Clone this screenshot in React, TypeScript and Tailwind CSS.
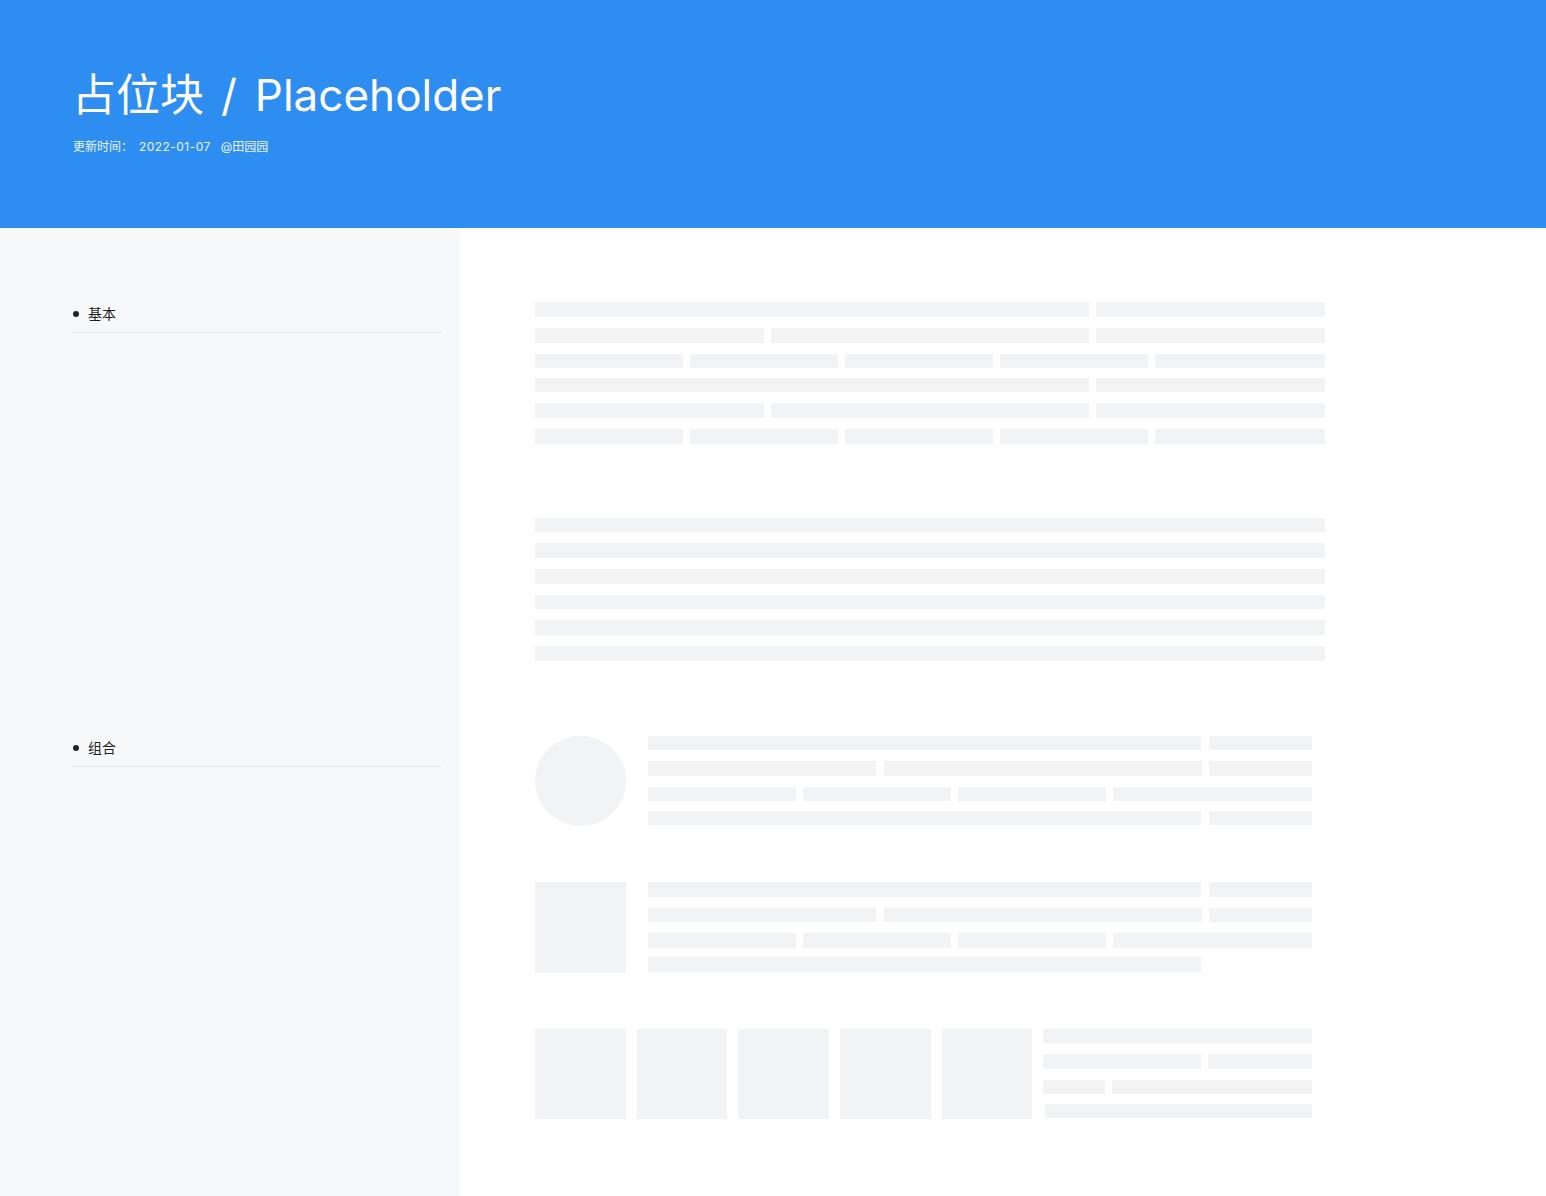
import React from 'react';

const FONT = { fontFamily: 'Inter, "Noto Sans CJK SC", sans-serif' };

// 一行：除最后一个外都是固定宽度，最后一个 flex-1（tail: false 表示没有收尾块）
type Row = { w: number[]; tail?: boolean; ml?: number };

const Bar: React.FC<{ row: Row }> = ({ row }) => (
  <div className="flex gap-[7.5px]" style={row.ml ? { marginLeft: row.ml } : undefined}>
    {row.w.map((w, i) => (
      <div key={i} className="h-[14.67px] shrink-0 bg-[#f2f3f5]" style={{ width: w }} />
    ))}
    {row.tail !== false && <div className="h-[14.67px] flex-1 bg-[#f2f3f5]" />}
  </div>
);

// 默认每三行为一组，size 传 0 则不分组
const Rows: React.FC<{ rows: Row[]; size?: number; className?: string }> = ({ rows, size = 3, className }) => {
  const groups: Row[][] = [];
  const step = size || rows.length;
  for (let i = 0; i < rows.length; i += step) groups.push(rows.slice(i, i + step));
  return (
    <div className={`flex flex-col gap-[9.33px] ${className || ''}`}>
      {groups.map((g, gi) => (
        <div key={gi} className="flex flex-col gap-[11px]">
          {g.map((r, ri) => (
            <Bar key={ri} row={r} />
          ))}
        </div>
      ))}
    </div>
  );
};

const wide: Row[] = [
  { w: [553.7] },
  { w: [228.7, 317.7] },
  { w: [147.5, 147.5, 147.5, 147.5] },
];

const side: Row[] = [
  { w: [553.7] },
  { w: [228.7, 317.7] },
  { w: [148, 147.5, 147.5] },
];

const NavItem: React.FC<{ label: string; className?: string }> = ({ label, className }) => (
  <div className={`border-b border-[#e7e8eb] pb-[7px] ${className || ''}`}>
    <div className="flex items-center gap-[9px] text-[14px] leading-[22px] text-[rgba(0,0,0,0.9)]">
      <span className="ml-[1px] h-[6px] w-[6px] rounded-full bg-[#222]" />
      <span>{label}</span>
    </div>
  </div>
);

const App: React.FC = () => {
  return (
    <div className="flex min-h-screen flex-col bg-white" style={FONT}>
      {/* 头部 */}
      <div className="h-[228px] shrink-0 bg-[#2e8df0] pl-[72px] pt-[65px] text-white">
        <h1 className="text-[44px] leading-[60px] font-normal">
          占位块<span className="ml-[17px] mr-[18px]">/</span>Placeholder
        </h1>
        <div className="mt-[12px] flex pl-[1px] text-[12px] leading-[20px] text-white/90">
          <span>更新时间：</span>
          <span className="ml-[6px] tracking-[0.45px]">2022-01-07</span>
          <span className="ml-[10px]">@田园园</span>
        </div>
      </div>

      <div className="flex flex-1">
        {/* 侧边导航 */}
        <div className="w-[460px] shrink-0 bg-[#f7f8fa] pl-[72px] pr-[18px] pt-[75px]">
          <NavItem label="基本" />
          <NavItem label="组合" className="mt-[404px]" />
        </div>

        {/* 内容 */}
        <div className="flex-1 pb-[77px] pl-[75px] pt-[74.3px]">
          <Rows className="w-[790.3px]" rows={[...wide, ...wide]} />

          <Rows
            className="mt-[74px] w-[790.3px]"
            size={0}
            rows={[{ w: [] }, { w: [] }, { w: [] }, { w: [] }, { w: [] }, { w: [] }]}
          />

          <div className="mt-[75px] flex w-[777.3px] gap-[22px]">
            <div className="h-[90.67px] w-[90.67px] shrink-0 rounded-full bg-[#f2f3f5]" />
            <Rows className="flex-1" rows={[...side, { w: [553.7] }]} />
          </div>

          <div className="mt-[55.7px] flex w-[777.3px] gap-[22px]">
            <div className="h-[90.67px] w-[90.67px] shrink-0 bg-[#f2f3f5]" />
            <Rows className="flex-1" rows={[...side, { w: [553.7], tail: false }]} />
          </div>

          <div className="mt-[56px] flex w-[777.3px]">
            <div className="flex shrink-0 gap-[11px]">
              {[0, 1, 2, 3, 4].map((i) => (
                <div key={i} className="h-[90.67px] w-[90.67px] bg-[#f2f3f5]" />
              ))}
            </div>
            <Rows
              className="ml-[10.7px] flex-1"
              rows={[{ w: [] }, { w: [158] }, { w: [62] }, { w: [], ml: 1.7 }]}
            />
          </div>
        </div>
      </div>
    </div>
  );
};

export default App;
